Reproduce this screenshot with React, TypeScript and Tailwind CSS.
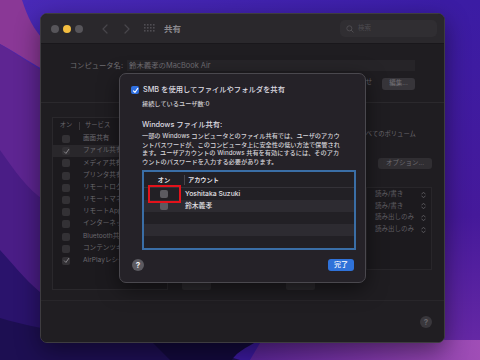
import React from "react";

function Wallpaper() {
  return (
    <svg className="absolute inset-0" width="480" height="360" viewBox="0 0 480 360">
      <defs>
        <linearGradient id="wbg" x1="0" y1="0" x2="1" y2="1">
          <stop offset="0" stopColor="#4a2ab8" />
          <stop offset="0.5" stopColor="#3a1ca6" />
          <stop offset="1" stopColor="#3a1690" />
        </linearGradient>
        <linearGradient id="wpink" x1="0" y1="0" x2="1" y2="0">
          <stop offset="0" stopColor="#5a2596" />
          <stop offset="0.5" stopColor="#7c36a6" />
          <stop offset="1" stopColor="#a04eb6" />
        </linearGradient>
        <linearGradient id="wright" x1="0" y1="0" x2="0" y2="1">
          <stop offset="0" stopColor="#3b1ca4" />
          <stop offset="0.6" stopColor="#45199a" />
          <stop offset="1" stopColor="#6a2aa6" />
        </linearGradient>
      </defs>
      <rect width="480" height="360" fill="url(#wbg)" />
      <rect x="440" y="0" width="40" height="360" fill="url(#wright)" />
      <path d="M0 0 L22 0 C28 18 34 30 44 40 L44 70 C26 60 12 50 0 44 Z" fill="#8a3896" />
      <path d="M0 44 C14 52 28 62 44 72 L44 360 L0 360 Z" fill="#5e2592" />
      <path d="M0 150 C14 170 28 190 44 200 L44 360 L0 360 Z" fill="#4a1d86" />
      <path d="M0 250 C18 270 30 285 44 295 L44 360 L0 360 Z" fill="#2a136c" />
      <path d="M0 318 C40 330 90 338 180 342 L240 360 L0 360 Z" fill="#1d0f52" />
      <path d="M150 340 L260 340 C240 350 235 355 232 360 L170 360 Z" fill="#130a3c" />
      <path d="M262 340 L480 340 L480 360 L250 360 C255 352 258 346 262 340 Z" fill="url(#wpink)" />
    </svg>
  );
}

function Box({ checked }: { checked?: boolean }) {
  return (
    <div className="w-[8px] h-[8px] rounded-[2px] bg-[#333135] flex items-center justify-center">
      {checked && (
        <svg width="7" height="7" viewBox="0 0 10 10">
          <path d="M2 5.5 L4.2 7.8 L8.2 2" stroke="#8a888d" strokeWidth="1.4" fill="none" strokeLinecap="round" strokeLinejoin="round" />
        </svg>
      )}
    </div>
  );
}

const services: [string, boolean][] = [
  ["画面共有", false],
  ["ファイル共有", true],
  ["メディア共有", false],
  ["プリンタ共有", false],
  ["リモートログイン", false],
  ["リモートマネージメント", false],
  ["リモートApple イベント", false],
  ["インターネット共有", false],
  ["Bluetooth共有", false],
  ["コンテンツキャッシュ", false],
  ["AirPlayレシーバ", true],
];

const perms = ["読み/書き", "読み/書き", "読み出しのみ", "読み出しのみ"];

function UpDown() {
  return (
    <svg width="5" height="8" viewBox="0 0 5 8">
      <path d="M0.8 3 L2.5 1.2 L4.2 3 M0.8 5 L2.5 6.8 L4.2 5" stroke="#5e5c61" strokeWidth="0.9" fill="none" strokeLinecap="round" strokeLinejoin="round" />
    </svg>
  );
}

export default function App() {
  return (
    <div className="relative w-[480px] h-[360px] overflow-hidden font-['Inter','Noto_Sans_CJK_JP',sans-serif]">
      <Wallpaper />

      {/* main window */}
      <div className="absolute left-[40px] top-[13px] w-[405px] h-[330px] rounded-[7px] border border-[#3e3c40] bg-[#1f1d21] overflow-hidden flex flex-col shadow-[0_8px_24px_rgba(0,0,0,0.45)]">
        {/* title bar */}
        <div className="h-[30px] shrink-0 bg-[#2a282c] border-b border-[#19171b] flex items-center pl-[10px] pr-[7px]">
          <div className="flex gap-[4px]">
            <div className="w-[8px] h-[8px] rounded-full bg-[#57555a]" />
            <div className="w-[8px] h-[8px] rounded-full bg-[#f3bd40]" />
            <div className="w-[8px] h-[8px] rounded-full bg-[#57555a]" />
          </div>
          <svg className="ml-[19px]" width="6" height="10" viewBox="0 0 6 10">
            <path d="M5 1 L1 5 L5 9" stroke="#48464b" strokeWidth="1.2" fill="none" strokeLinecap="round" strokeLinejoin="round" />
          </svg>
          <svg className="ml-[16px]" width="6" height="10" viewBox="0 0 6 10">
            <path d="M1 1 L5 5 L1 9" stroke="#48464b" strokeWidth="1.2" fill="none" strokeLinecap="round" strokeLinejoin="round" />
          </svg>
          <svg className="ml-[14px]" width="11" height="9" viewBox="0 0 11 9">
            {[0, 1, 2].map((r) =>
              [0, 1, 2, 3].map((c) => (
                <rect key={`${r}-${c}`} x={c * 3} y={r * 3} width="1.6" height="1.6" fill="#4f4d52" />
              ))
            )}
          </svg>
          <span className="ml-[9px] text-[8.5px] leading-[10px] font-semibold text-[#8b898e]">共有</span>
          <div className="ml-auto w-[97px] h-[17px] rounded-[5px] bg-[#302e32] flex items-center pl-[6px]">
            <svg width="8" height="8" viewBox="0 0 10 10">
              <circle cx="4.2" cy="4.2" r="3.2" stroke="#4f4d52" strokeWidth="1.2" fill="none" />
              <path d="M6.6 6.6 L9 9" stroke="#4f4d52" strokeWidth="1.2" strokeLinecap="round" />
            </svg>
            <span className="ml-[4px] text-[6.5px] text-[#4d4b50]">検索</span>
          </div>
        </div>

        {/* top section */}
        <div className="h-[59px] shrink-0 border-b border-[#2b292d] pl-[27px] pr-[29px] pt-[16px]">
          <div className="flex items-center gap-[4px]">
            <div className="w-[55px] text-right text-[7.3px] leading-[11px] text-[#6f6d72] whitespace-nowrap">コンピュータ名:</div>
            <div className="flex-1 h-[11px] bg-[#262428] flex items-center pl-[2px] text-[7.4px] text-[#6f6d72] whitespace-nowrap">鈴木義孝のMacBook Air</div>
          </div>
          <div className="flex mt-[7px] h-[12px]">
            <div className="flex-1 text-right pr-[10px] text-[6.3px] leading-[8px] text-[#6a686d] whitespace-nowrap">アドレスでアクセスできます。変更する場合はここをクリックしてくださせ</div>
            <div className="w-[33px] h-[12px] rounded-[3px] bg-[#37353a] flex items-center justify-center text-[6.5px] text-[#747277]">編集...</div>
          </div>
        </div>

        {/* middle section */}
        <div className="h-[197px] shrink-0 flex pl-[11px] pr-[12px] pt-[14px]">
          {/* services panel */}
          <div className="w-[116px] h-[173px] shrink-0 bg-[#1c1a1e] border border-[#2a282c]">
            <div className="h-[15px] flex items-center text-[6.3px] text-[#69676c]">
              <div className="w-[26px] text-center">オン</div>
              <div className="w-px h-[8px] bg-[#3a383c]" />
              <div className="pl-[5px]">サービス</div>
            </div>
            {services.map(([name, on], i) => (
              <div key={i} className={`h-[12.2px] flex items-center ${i === 1 ? "bg-[#29272b]" : ""}`}>
                <div className="w-[26px] flex justify-center">
                  <Box checked={on} />
                </div>
                <div className="pl-[4px] text-[6.6px] text-[#6b696e] whitespace-nowrap">{name}</div>
              </div>
            ))}
          </div>
          {/* middle column (mostly hidden) */}
          <div className="flex-1 flex items-end pb-[10px]">
            <div className="ml-[14px] w-[29px] h-[10px] rounded-[2px] bg-[#2c2a2e]" />
            <div className="ml-[75px] w-[29px] h-[10px] rounded-[2px] bg-[#2c2a2e]" />
          </div>
          {/* right column */}
          <div className="w-[66px] shrink-0 flex flex-col">
            <div className="mt-[13px] ml-[-6px] text-[6.3px] leading-[8px] text-[#69676c] whitespace-nowrap">すべてのボリューム</div>
            <div className="mt-[20px] ml-[12px] w-[54px] h-[11px] rounded-[3px] bg-[#302e32] flex items-center justify-center text-[6.5px] text-[#6f6d72]">オプション...</div>
            <div className="mt-[18px] h-[83px] bg-[#1c1a1e] border border-[#28262a] pt-[1px]">
              {perms.map((p, i) => (
                <div key={i} className="h-[11.6px] flex items-center pl-[8px] pr-[5px]">
                  <span className="flex-1 text-[6.5px] text-[#5f5d62] whitespace-nowrap">{p}</span>
                  <UpDown />
                </div>
              ))}
            </div>
          </div>
        </div>

        {/* bottom section */}
        <div className="flex-1 border-t border-[#28262a] bg-[#201e22] flex justify-end items-start pt-[15px] pr-[12px]">
          <div className="w-[12px] h-[12px] rounded-full bg-[#39373c] flex items-center justify-center text-[8px] font-bold text-[#67656a]">?</div>
        </div>
      </div>

      {/* SMB sheet */}
      <div className="absolute left-[119px] top-[73px] w-[247px] h-[210px] rounded-[7px] border border-[#4a484e] bg-[#252228] shadow-[0_6px_20px_rgba(0,0,0,0.5)] pl-[11px] pr-[9px] pt-[12px] flex flex-col">
        <div className="flex items-center h-[8px]">
          <div className="w-[8px] h-[8px] rounded-[2px] bg-[#2f6fe0] flex items-center justify-center">
            <svg width="7" height="7" viewBox="0 0 10 10">
              <path d="M2 5.5 L4.2 7.8 L8.2 2" stroke="#ffffff" strokeWidth="1.6" fill="none" strokeLinecap="round" strokeLinejoin="round" />
            </svg>
          </div>
          <span className="ml-[4px] text-[7.3px] leading-[8px] font-medium text-[#dedce1] whitespace-nowrap">SMB を使用してファイルやフォルダを共有</span>
        </div>
        <div className="pl-[11px] mt-[6px] text-[6.2px] leading-[8px] font-medium text-[#cfcdd2] whitespace-nowrap">接続しているユーザ数:0</div>
        <div className="pl-[11px] mt-[13px] text-[7.3px] leading-[8px] font-medium text-[#dedce1] whitespace-nowrap">Windows ファイル共有:</div>
        <div className="pl-[11px] mt-[3px] text-[6.2px] leading-[8.6px] font-medium text-[#d6d4d9] whitespace-nowrap">
          一部の Windows コンピュータとのファイル共有では、ユーザのアカウ
          <br />
          ントパスワードが、このコンピュータ上に安全性の低い方法で保管され
          <br />
          ます。ユーザアカウントの Windows 共有を有効にするには、そのアカ
          <br />
          ウントのパスワードを入力する必要があります。
        </div>
        <div className="ml-[11px] mt-[4px] h-[80px] border-2 border-[#3a6ea6] bg-[#222025] flex flex-col">
          <div className="h-[16px] flex items-center border-b border-[#343238] text-[6.2px] font-bold text-[#e4e2e7]">
            <div className="w-[40px] text-center">オン</div>
            <div className="w-px h-[10px] bg-[#48464c]" />
            <div className="pl-[3px]">アカウント</div>
          </div>
          {["Yoshitaka Suzuki", "鈴木義孝", "", "", ""].map((n, i) => (
            <div key={i} className={`h-[12px] shrink-0 flex items-center ${i % 2 === 1 ? "bg-[#2d2b31]" : ""}`}>
              <div className="w-[40px] flex justify-center">
                {n && <div className="w-[8px] h-[8px] rounded-[2px] bg-[#5c5a60]" />}
              </div>
              <div className="pl-[1px] text-[6.8px] font-medium text-[#e2e0e5] whitespace-nowrap">{n}</div>
            </div>
          ))}
        </div>
        <div className="mt-[9px] flex items-center justify-between pl-[1px] pr-[2px]">
          <div className="w-[12px] h-[12px] rounded-full bg-[#5c5a60] flex items-center justify-center text-[8px] font-bold text-[#f0eef2]">?</div>
          <div className="w-[26px] h-[12px] rounded-[3px] bg-[#2f72d9] flex items-center justify-center text-[7px] font-medium text-white">完了</div>
        </div>
      </div>

      {/* red annotation */}
      <div className="absolute left-[148px] top-[185px] w-[33px] h-[18px] border-2 border-[#e3121b]" />
    </div>
  );
}
